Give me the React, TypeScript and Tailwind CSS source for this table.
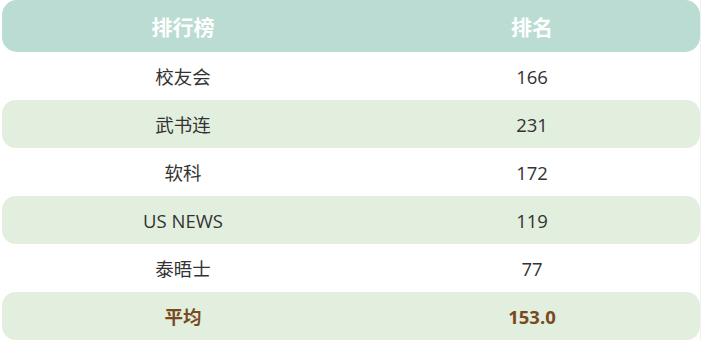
import React from "react";

const rows: { name: string; rank: string }[] = [
  { name: "校友会", rank: "166" },
  { name: "武书连", rank: "231" },
  { name: "软科", rank: "172" },
  { name: "US NEWS", rank: "119" },
  { name: "泰晤士", rank: "77" },
];

export default function App() {
  return (
    <div
      className="w-[703px] h-[343px] bg-white overflow-hidden"
      style={{ fontFamily: '"Open Sans", "Noto Sans CJK SC", sans-serif' }}
    >
      <div className="ml-[2px] w-[699px] flex flex-col border-r border-[#f0f0f0]">
        <div className="grid grid-cols-[362px_1fr] h-[52px] pt-[3px] items-center bg-[#badcd2] rounded-[15px] text-white font-bold text-[21px]">
          <div className="text-center">排行榜</div>
          <div className="text-center">排名</div>
        </div>
        {rows.map((r, i) => (
          <div
            key={r.name}
            className={
              i % 2 === 1
                ? "grid grid-cols-[362px_1fr] h-[48px] pt-[2px] items-center bg-[#e2efdf] rounded-[14px] text-[#333333] text-[18.5px]"
                : "grid grid-cols-[362px_1fr] h-[48px] pt-[2px] items-center bg-white text-[#333333] text-[18.5px]"
            }
          >
            <div className="text-center">{r.name}</div>
            <div className="text-center">{r.rank}</div>
          </div>
        ))}
        <div className="grid grid-cols-[362px_1fr] h-[48px] pt-[2px] items-center bg-[#e2efdf] rounded-[14px] text-[#7a4a1e] font-bold text-[18.5px]">
          <div className="text-center">平均</div>
          <div className="text-center">153.0</div>
        </div>
      </div>
    </div>
  );
}
